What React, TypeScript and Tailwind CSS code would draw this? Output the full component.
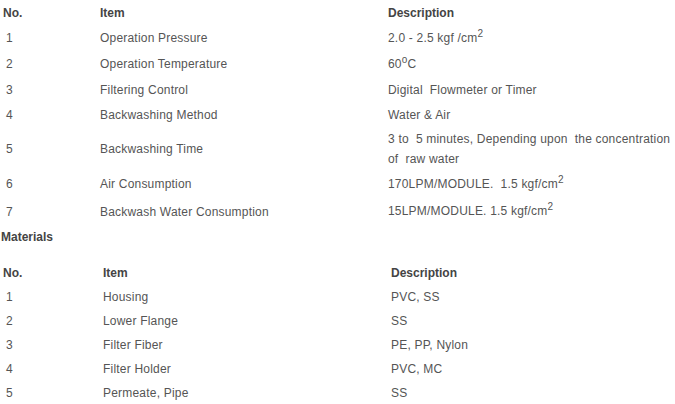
import React from 'react'

type Row = { no: string; item: string; desc: React.ReactNode; h: string }

const Sup = ({ children }: { children: React.ReactNode }) => (
    <span className="relative -top-[5px] text-[10px]">{children}</span>
)

const specs: Row[] = [
    { no: '1', item: 'Operation Pressure', desc: <>2.0 - 2.5 kgf /cm<Sup>2</Sup></>, h: 'h-[26px]' },
    { no: '2', item: 'Operation Temperature', desc: <>60<Sup>o</Sup>C</>, h: 'h-[26px]' },
    { no: '3', item: 'Filtering Control', desc: 'Digital  Flowmeter or Timer', h: 'h-[26px]' },
    { no: '4', item: 'Backwashing Method', desc: 'Water & Air', h: 'h-[24px]' },
    {
        no: '5',
        item: 'Backwashing Time',
        desc: <>3 to  5 minutes, Depending upon  the concentration{'\n'}of  raw water</>,
        h: 'h-[44px]',
    },
    { no: '6', item: 'Air Consumption', desc: <>170LPM/MODULE.  1.5 kgf/cm<Sup>2</Sup></>, h: 'h-[26px]' },
    { no: '7', item: 'Backwash Water Consumption', desc: <>15LPM/MODULE. 1.5 kgf/cm<Sup>2</Sup></>, h: 'h-[29px]' },
]

const materials: Row[] = [
    { no: '1', item: 'Housing', desc: 'PVC, SS', h: 'h-[24px]' },
    { no: '2', item: 'Lower Flange', desc: 'SS', h: 'h-[24px]' },
    { no: '3', item: 'Filter Fiber', desc: 'PE, PP, Nylon', h: 'h-[24px]' },
    { no: '4', item: 'Filter Holder', desc: 'PVC, MC', h: 'h-[24px]' },
    { no: '5', item: 'Permeate, Pipe', desc: 'SS', h: 'h-[24px]' },
]

function SpecTable({ rows, cols }: { rows: Row[]; cols: string }) {
    return (
        <div className="flex flex-col">
            <div className={`grid ${cols} h-[25px] items-center font-bold text-[#444] tracking-normal`}>
                <div className="pl-[3px]">No.</div>
                <div>Item</div>
                <div>Description</div>
            </div>
            {rows.map((r) => (
                <div key={r.no} className={`grid ${cols} ${r.h} items-center`}>
                    <div className="pl-[6px]">{r.no}</div>
                    <div>{r.item}</div>
                    <div className="whitespace-pre leading-[20px]">{r.desc}</div>
                </div>
            ))}
        </div>
    )
}

export default function App() {
    return (
        <div
            className="w-[675px] h-[404px] bg-white text-[12px] leading-[20px] tracking-[0.2px] text-[#555] overflow-hidden"
            style={{ fontFamily: '"Liberation Sans", Arial, sans-serif' }}
        >
            <SpecTable rows={specs} cols="grid-cols-[100px_288px_1fr]" />
            <div className="h-[22px] flex items-center pl-[1px] font-bold text-[#444] tracking-normal">Materials</div>
            <div className="mt-[12px]">
                <SpecTable rows={materials} cols="grid-cols-[103px_288px_1fr]" />
            </div>
        </div>
    )
}
